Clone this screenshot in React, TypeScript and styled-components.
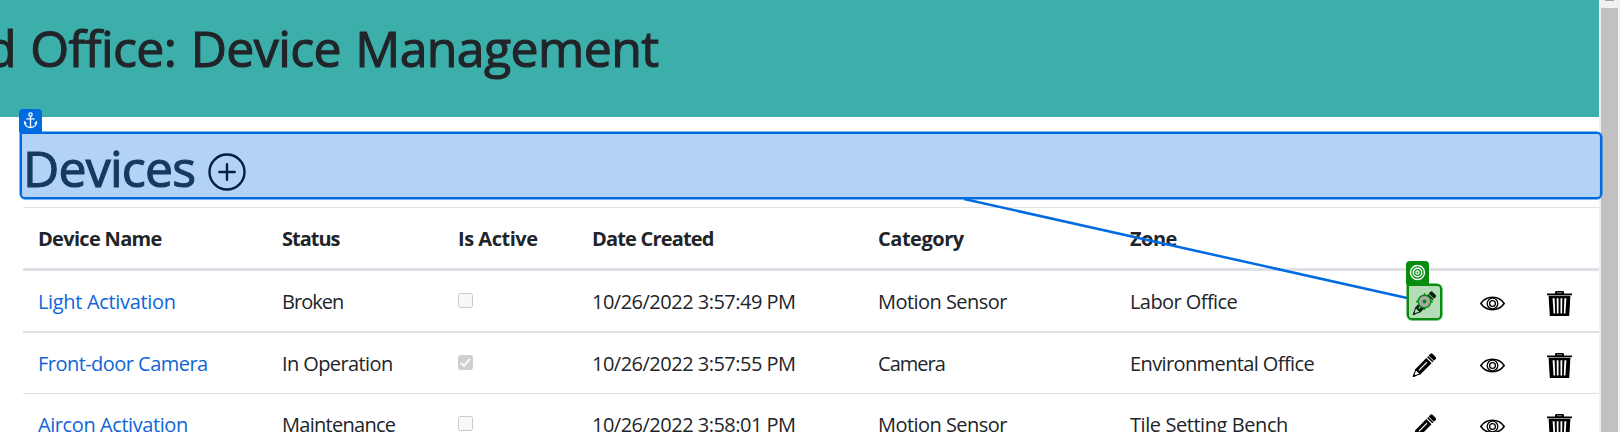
import React from 'react';
import styled, { createGlobalStyle } from 'styled-components';

const GlobalStyle = createGlobalStyle`
  * { box-sizing: border-box; }
  body {
    margin: 0;
    overflow: hidden;
    background: #fff;
    color: #212529;
    font: 400 20px/30px "Open Sans", "Noto Sans", sans-serif;
  }
`;

const Window = styled.div`
  position: relative;
  display: flex;
  width: 1620px;
  height: 432px;
  overflow: hidden;
`;

const Page = styled.main`
  flex: 1;
  min-width: 0;
  height: 432px;
  overflow: hidden;
`;

const Banner = styled.header`
  height: 117px;
  padding-top: 18px;
  background: #3dafaa;
  overflow: hidden;
`;

const Title = styled.h1<{ $track: number }>`
  margin: 0;
  font-size: 50px;
  font-weight: 500;
  line-height: 60px;
  white-space: nowrap;
  letter-spacing: ${(p) => p.$track}px;
  -webkit-text-stroke: 1.1px currentColor;
`;

const BannerTitle = styled(Title)`
  margin-left: -14px;
  word-spacing: 2px;
`;

const Section = styled.section`
  padding-left: 23px;
`;

const SectionHead = styled.div`
  display: flex;
  align-items: flex-start;
  height: 90px;
  padding-top: 21px;
`;

const AddIcon = styled.svg`
  width: 38px;
  height: 38px;
  margin: 15px 0 0 13px;
`;

const Row = styled.div<{ $line: number }>`
  display: grid;
  grid-template-columns: 244px 176px 134px 286px 252px 282px 68px 67px 67px;
  border-bottom: ${(p) => p.$line}px solid #dee2e6;
`;

const HeadRow = styled(Row)`
  border-top: 1px solid #dee2e6;
  font-weight: 700;
`;

const Cell = styled.div<{ $track?: number }>`
  height: 60px;
  padding: 16px 0 14px 15px;
  white-space: nowrap;
  letter-spacing: ${(p) => p.$track ?? 0}px;
`;

const IconCell = styled.div`
  padding: 20px 0 0 15px;
  line-height: 0;
`;

const CheckCell = styled.div`
  padding: 22px 0 0 15px;
  line-height: 0;
`;

const Link = styled.a`
  color: #0f65d8;
  text-decoration: none;
`;

const Check = styled.span<{ $on: boolean }>`
  display: inline-flex;
  width: 15px;
  height: 15px;
  border: 1px solid ${(p) => (p.$on ? '#cfcfcf' : '#cacaca')};
  border-radius: 2.5px;
  background: ${(p) => (p.$on ? '#cfcfcf' : '#f8f8f8')};
`;

const Scrollbar = styled.aside`
  width: 21px;
  height: 432px;
  padding: 0 3px 0 2px;
  background: #f1f1f1;
`;

const ScrollArrow = styled.div`
  width: 9px;
  height: 1px;
  margin: 0 0 7px 4px;
  background: #a3a3a3;
`;

const Thumb = styled.div`
  width: 17px;
  height: 424px;
  background: #c1c1c1;
`;

const Marker = styled.div<{ $tone: string; $fill: string }>`
  position: absolute;
  border: 2px solid ${(p) => p.$tone};
  background: ${(p) => p.$fill};
  background-clip: padding-box;
  box-shadow: 0 0 0 0.5px ${(p) => p.$tone};
`;

const AnchorMarker = styled(Marker)`
  left: 20px;
  top: 131.5px;
  width: 1582px;
  height: 67.5px;
  border-radius: 0 5px 5px 5px;
`;

const TargetMarker = styled(Marker)`
  left: 1407px;
  top: 284px;
  width: 35px;
  height: 36px;
  border-radius: 0 5px 5px 5px;
`;

const Badge = styled.div<{ $tone: string; $x: number; $y: number }>`
  position: absolute;
  left: ${(p) => p.$x}px;
  top: ${(p) => p.$y}px;
  display: flex;
  align-items: center;
  justify-content: center;
  width: 22.5px;
  height: 23.5px;
  border-radius: 4px 4px 0 0;
  background: ${(p) => p.$tone};
`;

const Connector = styled.svg`
  position: absolute;
  left: 960px;
  top: 195px;
  width: 450px;
  height: 110px;
`;

const Crosshair = styled.svg`
  position: absolute;
  left: 1415px;
  top: 292px;
  width: 19px;
  height: 19px;
`;

const BLUE = '#006be0';
const GREEN = '#078c10';

const Pencil = () => (
  <svg width="25" height="25" viewBox="0 0 25 25">
    <g transform="translate(0.8 24) rotate(-45.5)">
      <path d="M0.6 0 L7.5 -3.1 L7.5 3.1 Z" fill="#fff" stroke="#000" strokeWidth="1" strokeLinejoin="round" />
      <path d="M0 0 L3 -1.5 L3 1.5 Z" />
      <rect x="7" y="-3.7" width="16" height="7.4" />
      <rect x="9" y="-0.9" width="11.5" height="1.2" fill="#fff" />
      <path d="M24.2 -3.7 H25.7 V3.7 H24.2 Z" />
      <path d="M26.4 -3.7 H28.6 Q30.4 -3.7 30.4 -1.9 V1.9 Q30.4 3.7 28.6 3.7 H26.4 Z" />
    </g>
  </svg>
);

const Eye = () => (
  <svg width="25" height="25" viewBox="0 0 25 25" fill="none" stroke="#000">
    <path d="M0.8 12.5 C6.5 4.3 18.5 4.3 24.2 12.5 C18.5 20.7 6.5 20.7 0.8 12.5 Z" strokeWidth="1.5" />
    <circle cx="12.5" cy="12.5" r="5.3" strokeWidth="1.3" />
    <circle cx="12.5" cy="12.5" r="2.9" strokeWidth="1.3" />
  </svg>
);

const Trash = () => (
  <svg width="25" height="25" viewBox="0 0 25 25">
    <path d="M8 2.4 V1.2 Q8 0 9.5 0 H15.5 Q17 0 17 1.2 V2.4 H25 V4.2 H0 V2.4 Z" />
    <rect x="10" y="1.1" width="5" height="1.1" fill="#777" />
    <path d="M1.6 4.8 H23.4 L22.2 25 H2.8 Z" />
    <path d="M5.6 7.3 H7.6 L8.2 22.5 H6.6 Z M9.7 7.3 H11.5 V22.5 H9.9 Z M13.5 7.3 H15.3 L15.1 22.5 H13.5 Z M17.4 7.3 H19.4 L18.4 22.5 H16.8 Z" fill="#fff" />
  </svg>
);

type Txt = [string, number];
type Device = { name: Txt; status: Txt; active: boolean; created: Txt; category: Txt; zone: Txt };

const columns: Txt[] = [
  ['Device Name', -0.69],
  ['Status', -1],
  ['Is Active', -0.48],
  ['Date Created', -0.82],
  ['Category', -0.47],
  ['Zone', -0.5],
];

const devices: Device[] = [
  {
    name: ['Light Activation', -0.33],
    status: ['Broken', -0.97],
    active: false,
    created: ['10/26/2022 3:57:49 PM', -0.51],
    category: ['Motion Sensor', -0.54],
    zone: ['Labor Office', -0.57],
  },
  {
    name: ['Front-door Camera', -0.54],
    status: ['In Operation', -0.6],
    active: true,
    created: ['10/26/2022 3:57:55 PM', -0.51],
    category: ['Camera', -0.97],
    zone: ['Environmental Office', -0.61],
  },
  {
    name: ['Aircon Activation', -0.42],
    status: ['Maintenance', -0.72],
    active: false,
    created: ['10/26/2022 3:58:01 PM', -0.51],
    category: ['Motion Sensor', -0.54],
    zone: ['Tile Setting Bench', -0.43],
  },
];

export default function App() {
  return (
    <Window>
      <GlobalStyle />
      <Page>
        <Banner>
          <BannerTitle $track={-0.62}>d Office: Device Management</BannerTitle>
        </Banner>
        <Section>
          <SectionHead>
            <Title as="h2" $track={-0.8}>Devices</Title>
            <AddIcon viewBox="0 0 38 38" fill="none" stroke="#000" strokeWidth="2.4" strokeLinecap="round">
              <circle cx="19" cy="19" r="17.5" />
              <path d="M11.3 19 H26.7 M19 11.3 V26.7" />
            </AddIcon>
          </SectionHead>
          <HeadRow $line={3}>
            {columns.map(([label, track]) => (
              <Cell key={label} $track={track}>{label}</Cell>
            ))}
          </HeadRow>
          {devices.map((d, i) => (
            <Row key={d.name[0]} $line={i === 0 ? 2 : 1}>
              <Cell $track={d.name[1]}><Link>{d.name[0]}</Link></Cell>
              <Cell $track={d.status[1]}>{d.status[0]}</Cell>
              <CheckCell>
                <Check $on={d.active}>
                  {d.active && (
                    <svg width="13" height="13" viewBox="0 0 13 13" fill="none" stroke="#f8f8f8" strokeWidth="2">
                      <path d="M2 7 L5 10 L11 2.8" />
                    </svg>
                  )}
                </Check>
              </CheckCell>
              <Cell $track={d.created[1]}>{d.created[0]}</Cell>
              <Cell $track={d.category[1]}>{d.category[0]}</Cell>
              <Cell $track={d.zone[1]}>{d.zone[0]}</Cell>
              <IconCell><Pencil /></IconCell>
              <IconCell><Eye /></IconCell>
              <IconCell><Trash /></IconCell>
            </Row>
          ))}
        </Section>
      </Page>
      <Scrollbar>
        <ScrollArrow />
        <Thumb />
      </Scrollbar>

      <AnchorMarker $tone={BLUE} $fill="rgba(0, 107, 224, 0.3)" />
      <Badge $tone={BLUE} $x={19.3} $y={108.5}>
        <svg width="15" height="17" viewBox="0 0 15 17" fill="none" stroke="#fff" strokeWidth="1.3" strokeLinecap="round">
          <circle cx="7.5" cy="2.6" r="1.7" />
          <path d="M7.5 4.5 V15.3 M3.8 6.9 H11.2" />
          <path d="M1.4 9.8 C1.6 13.5 4.2 15.4 7.5 15.6 C10.8 15.4 13.4 13.5 13.6 9.8 M1.4 9.8 L2.9 11.4 M13.6 9.8 L12.1 11.4" />
        </svg>
      </Badge>
      <Connector viewBox="0 0 450 110">
        <line x1="4" y1="4" x2="447" y2="103" stroke={BLUE} strokeWidth="2.5" />
      </Connector>
      <TargetMarker $tone={GREEN} $fill="rgba(7, 140, 16, 0.3)" />
      <Badge $tone={GREEN} $x={1406.4} $y={260.8}>
        <svg width="17" height="17" viewBox="0 0 17 17" fill="none" stroke="#fff" strokeWidth="1.4">
          <circle cx="8.5" cy="8.5" r="7" />
          <circle cx="8.5" cy="8.5" r="4.3" />
          <circle cx="8.5" cy="8.5" r="1.6" />
        </svg>
      </Badge>
      <Crosshair viewBox="0 0 19 19" fill="none" stroke={GREEN} strokeWidth="1.5">
        <circle cx="9.5" cy="9.5" r="6.3" fill="#a9a9a9" />
        <path d="M9.5 1 V4 M9.5 15 V18 M1 9.5 H4 M15 9.5 H18" />
        <circle cx="9.5" cy="9.5" r="2" fill={GREEN} stroke="none" />
      </Crosshair>
    </Window>
  );
}
